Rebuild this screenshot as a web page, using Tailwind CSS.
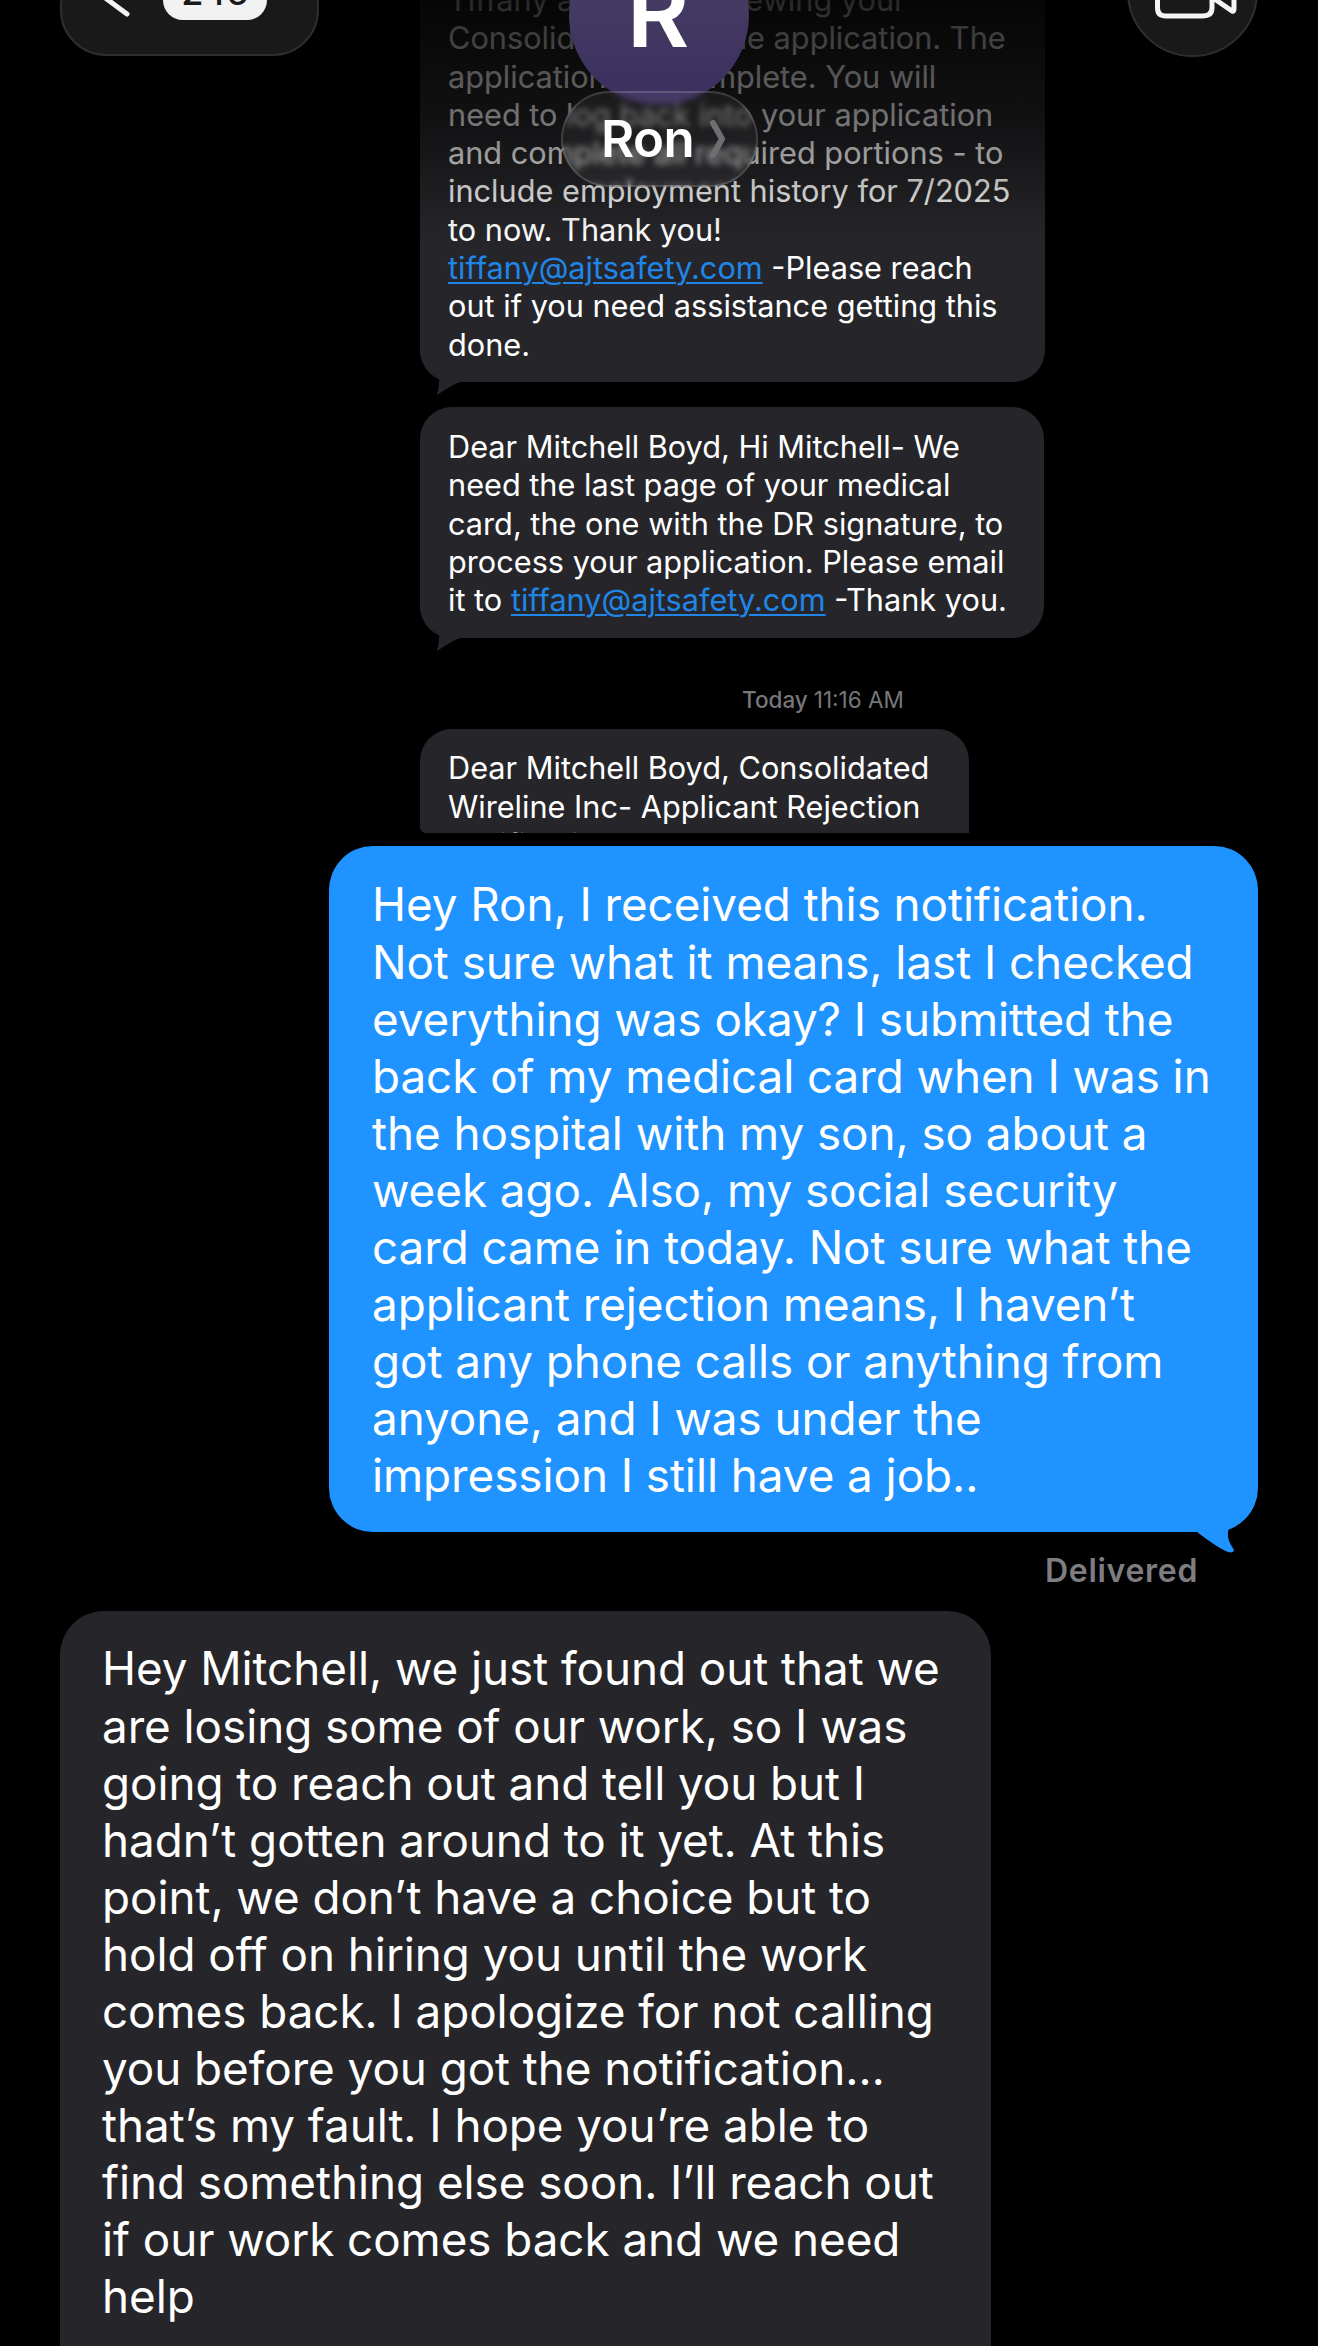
<!DOCTYPE html>
<html>
<head>
<meta charset="utf-8">
<script src="https://cdn.jsdelivr.net/npm/@tailwindcss/browser@4"></script>
</head>
<body class="bg-black">
<div class="relative w-[1318px] h-[2346px] overflow-hidden bg-black text-white font-['Inter','Liberation_Sans',sans-serif]">
  <div class="flex flex-col">
    <!-- top incoming -->
    <div class="relative ml-[420px] mt-[-39px] w-[625px] rounded-[32px] bg-[#26262a] pl-[28px] pt-[20px] pb-[18px] text-[30.7px] leading-[38.3px] whitespace-nowrap">
      <svg class="absolute left-0 bottom-[-14px]" width="50" height="46" viewBox="0 0 50 46"><path d="M0 0 C1 14 8 22 19 26 C20 32 18 40 17 45 C22 42 30 36 40 32 L50 32 L50 0 Z" fill="#26262a"/></svg>
      <div class="relative">Tiffany at AJT is reviewing your<br>Consolidated Wireline application. The<br>application is incomplete. You will<br>need to log back into your application<br>and complete all required portions - to<br>include employment history for 7/2025<br>to now. Thank you!<br><span class="text-[#1f86e8] underline underline-offset-[3px] decoration-2">tiffany@ajtsafety.com</span> -Please reach<br>out if you need assistance getting this<br>done.</div>
    </div>
    <div class="relative ml-[420px] mt-[25px] w-[624px] rounded-[32px] bg-[#26262a] pl-[28px] pt-[21px] pb-[19px] text-[30.7px] leading-[38.3px] whitespace-nowrap">
      <svg class="absolute left-0 bottom-[-14px]" width="50" height="46" viewBox="0 0 50 46"><path d="M0 0 C1 14 8 22 19 26 C20 32 18 40 17 45 C22 42 30 36 40 32 L50 32 L50 0 Z" fill="#26262a"/></svg>
      <div class="relative">Dear Mitchell Boyd, Hi Mitchell- We<br>need the last page of your medical<br>card, the one with the DR signature, to<br>process your application. Please email<br>it to <span class="text-[#1f86e8] underline underline-offset-[3px] decoration-2">tiffany@ajtsafety.com</span> -Thank you.</div>
    </div>
    <div class="mt-[49px] ml-[742px] h-[26px] text-[22.5px] leading-[26px] font-medium text-[#77777b]">Today <span class="font-normal">11:16 AM</span></div>
    <div class="ml-[420px] mt-[16px] w-[549px] h-[104px] overflow-hidden rounded-t-[32px] rounded-bl-[6px] bg-[#26262a] pl-[28px] pt-[20px] text-[30.7px] leading-[38.3px] whitespace-nowrap">
      Dear Mitchell Boyd, Consolidated<br>Wireline Inc- Applicant Rejection<br>Notification
    </div>
    <!-- outgoing -->
    <div class="relative ml-[329px] mt-[13px] w-[929px] h-[686px] rounded-[44px] bg-[#1f93ff] pl-[43px] pt-[30px] text-[45.8px] leading-[57.1px] tracking-[-0.05px] whitespace-nowrap">
      <svg class="absolute right-0 bottom-[-23px]" width="80" height="85" viewBox="0 0 80 85"><path d="M80 0 C80 24 74 38 62 47 C54 52 49 58 50 66 C50 71 54 76 56 80 C56 82 53 83 50 82 C40 78 30 70 19 62 L0 62 L0 0 Z" fill="#1f93ff"/></svg>
      <div class="relative">Hey Ron, I received this notification.<br>Not sure what it means, last I checked<br>everything was okay? I submitted the<br>back of my medical card when I was in<br>the hospital with my son, so about a<br>week ago. Also, my social security<br>card came in today. Not sure what the<br>applicant rejection means, I haven’t<br>got any phone calls or anything from<br>anyone, and I was under the<br>impression I still have a job..</div>
    </div>
    <div class="mt-[21px] ml-[1045px] h-[36px] text-[32px] leading-[36px] font-semibold tracking-[0.7px] text-[#7d7d82]">Delivered</div>
    <!-- incoming large -->
    <div class="ml-[60px] mt-[22px] w-[931px] h-[780px] rounded-[44px] bg-[#26262a] pl-[42px] pt-[29px] text-[45.8px] leading-[57.1px] tracking-[-0.05px] whitespace-nowrap">
      Hey Mitchell, we just found out that we<br>are losing some of our work, so I was<br>going to reach out and tell you but I<br>hadn’t gotten around to it yet. At this<br>point, we don’t have a choice but to<br>hold off on hiring you until the work<br>comes back. I apologize for not calling<br>you before you got the notification…<br>that’s my fault. I hope you’re able to<br>find something else soon. I’ll reach out<br>if our work comes back and we need<br>help
    </div>
  </div>

  <!-- fade under nav -->
  <div class="absolute left-0 top-0 w-full h-[240px] bg-gradient-to-b from-black/85 via-black/55 to-transparent"></div>

  <!-- nav overlay -->
  <div class="absolute left-[60px] top-[-40px] w-[259px] h-[96px] rounded-[46px] border-2 border-[#2e2e2e] bg-[#191919] flex items-end pl-[42px]">
    <svg class="mb-[34px] overflow-visible" width="30" height="20" viewBox="0 0 30 20"><path d="M0 -3 L23 14" fill="none" stroke="#f5f5f5" stroke-width="5" stroke-linecap="round"/></svg>
    <div class="ml-[29px] mb-[34px] w-[104px] h-[60px] rounded-[20px] bg-[#f2f2f2] flex items-end justify-center text-[36px] leading-[36px] font-medium text-[#1a1a1a] pb-[10px]">245</div>
  </div>
  <div class="absolute left-[569px] top-[-75px] w-[180px] h-[180px] rounded-full bg-gradient-to-b from-[#4c4366] to-[#3a2f5e] flex items-center justify-center text-[96px] font-semibold text-white pb-[7px] pr-[2px]">R</div>
  <div class="absolute left-[561px] top-[91px] w-[197px] h-[96px] rounded-[48px] border-2 border-white/15 bg-white/5 backdrop-blur-[3px] flex items-center pl-[38px]">
    <span class="text-[51px] leading-[56px] font-semibold tracking-[-0.6px]">Ron</span>
    <svg class="ml-[16px]" width="16" height="38" viewBox="0 0 16 38"><path d="M3 3 L12 19 L3 35" fill="none" stroke="#6f6f72" stroke-width="6" stroke-linecap="round" stroke-linejoin="round"/></svg>
  </div>
  <div class="absolute left-[1127px] top-[-74px] w-[131px] h-[131px] rounded-full border-2 border-[#2e2e2e] bg-[#191919] flex items-end pl-[21px] pb-[31px]">
    <svg class="overflow-visible" width="90" height="24" viewBox="0 0 90 24"><path d="M7.5 -10 V8 Q7.5 16 16 16 H52 Q62 16 62 8 V-10 M66 0 L82 11 Q84 12 84 9 V-10" fill="none" stroke="#f5f5f5" stroke-width="5" stroke-linecap="round" stroke-linejoin="round"/></svg>
  </div>
</div>
</body>
</html>
